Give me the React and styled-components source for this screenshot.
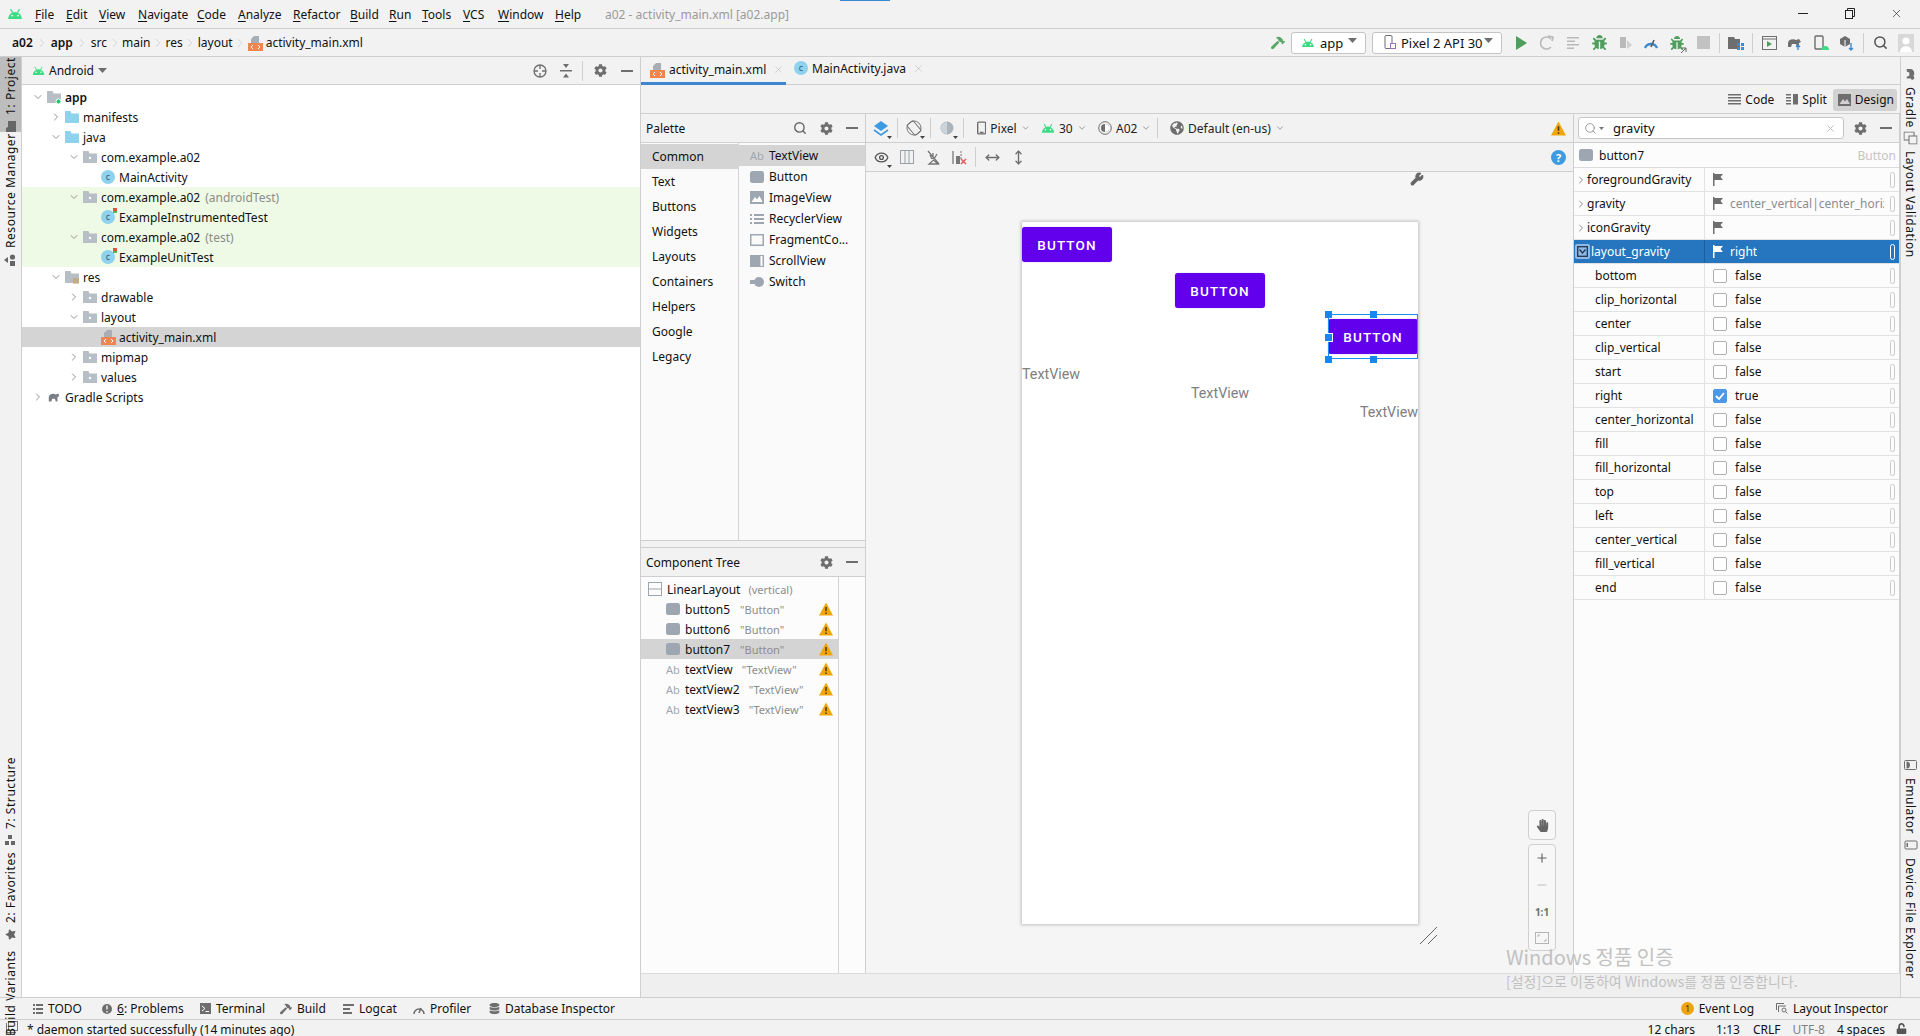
import React from "react";
import styled, { createGlobalStyle } from "styled-components";
import {
  FaCog, FaBug, FaStar, FaHandPaper, FaGlobeAmericas, FaDatabase, FaUnlock, FaHammer,
} from "react-icons/fa";
import { Search, X, Minus, Plus, Eye, ChevronDown, ChevronRight, MoveHorizontal, MoveVertical, Wrench } from "lucide-react";

const GlobalStyle = createGlobalStyle`
  html, body { margin: 0; padding: 0; background: #f2f2f2; }
  * { box-sizing: border-box; }
  body { font-family: "Noto Sans", "Noto Sans CJK KR", sans-serif; font-size: 12px; color: #111; }
`;

/* small drawings */
const Android = ({ size = 16, color = "#3ddc84" }) => (
  <svg width={size} height={size * 0.7} viewBox="0 0 16 11">
    <path d="M1 11a7 7 0 0 1 14 0z" fill={color} />
    <path d="M3.5 1 5.5 4.5M12.5 1 10.5 4.5" stroke={color} strokeWidth="1.2" />
    <circle cx="5" cy="7.5" r=".9" fill="#fff" />
    <circle cx="11" cy="7.5" r=".9" fill="#fff" />
  </svg>
);
const Folder = ({ color = "#b8bec6", dot, lines }) => (
  <svg width="14" height="14" viewBox="0 0 14 14">
    <path d="M0 1h5.5l1 2.5H14V13H0z" fill={color} />
    {dot === "white" && <circle cx="7" cy="8" r="1.2" fill="#fff" />}
    {dot === "green" && <circle cx="11.5" cy="11.5" r="2.5" fill="#1ec96b" stroke="#fff" />}
    {lines && <path d="M8 9h6M8 11h6M8 13h6" stroke="#c99a4b" strokeWidth="1" />}
  </svg>
);
const XmlFile = () => (
  <svg width="15" height="16" viewBox="0 0 15 16">
    <path d="M6 1h5v7H3V4z" fill="#a9aeb5" />
    <rect y="8" width="15" height="8" fill="#f0854e" />
    <path d="M5 10 3 12l2 2M10 10l2 2-2 2" fill="none" stroke="#fff" strokeWidth="1" />
  </svg>
);
const Warn = ({ size = 14 }) => (
  <svg width={size} height={size} viewBox="0 0 14 14">
    <path d="M7 .5 14 13.5H0z" fill="#f2a50c" />
    <path d="M7 5v4.2M7 10.4V12" stroke="#4a3a10" strokeWidth="1.5" />
  </svg>
);
const Flag = ({ color = "#6e6e6e" }) => (
  <svg width="10" height="13" viewBox="0 0 10 13">
    <path d="M0 0h1.5v1H10L7.5 4 10 7H1.5v6H0z" fill={color} />
  </svg>
);
const ButtonGlyph = () => (
  <svg width="14" height="12" viewBox="0 0 14 12"><rect width="14" height="12" rx="2.5" fill="#9ea7b1" /></svg>
);
const Chevron = ({ open }) =>
  open ? <ChevronDown size={12} color="#777" strokeWidth={1.6} /> : <ChevronRight size={12} color="#777" strokeWidth={1.6} />;
const Gear = () => <FaCog size={13} color="#6e6e6e" />;
const Dash = () => <svg width="12" height="2" viewBox="0 0 12 2"><rect width="12" height="2" fill="#6e6e6e" /></svg>;
const Caret = () => <svg width="9" height="5" viewBox="0 0 9 5"><path d="M0 0h9L4.5 5z" fill="#6e6e6e" /></svg>;
const SlimChevron = () => <ChevronDown size={10} color="#8a8a8a" strokeWidth={2} />;

/* shell */
const Root = styled.div`
  width: 1920px; height: 1036px; display: flex; flex-direction: column; overflow: hidden; position: relative; background: #f2f2f2;
`;
const MenuBar = styled.div`
  height: 29px; flex: none; display: flex; align-items: center; border-bottom: 1px solid #cfcfcf; position: relative; padding-bottom: 1px;
`;
const Progress = styled.div`
  position: absolute; top: 0; left: 840px; width: 50px; height: 1px; background: #3d86d0;
`;
const AppLogo = styled.div`
  width: 35px; padding-left: 7px; display: flex; align-items: center;
`;
const MenuItem = styled.span`
  position: absolute; left: ${(p) => p.$x}px; top: 6px; line-height: 17px;
  u { text-underline-offset: 2px; }
`;
const WindowTitle = styled.span`
  position: absolute; left: 605px; top: 6px; line-height: 17px; color: #9a9a9a;
`;
const WindowButtons = styled.div`
  margin-left: auto; display: flex; align-items: center; height: 100%;
`;
const WindowButton = styled.div`
  width: 47px; display: flex; align-items: center; justify-content: center;
`;
const NavBar = styled.div`
  height: 28px; flex: none; display: flex; align-items: center; border-bottom: 1px solid #cfcfcf; padding-left: 12px;
`;
const Crumb = styled.span`
  font-weight: ${(p) => (p.$bold ? 600 : 400)};
  display: flex; align-items: center; gap: 3px;
`;
const CrumbSep = styled.span`
  display: flex; width: ${(p) => p.$w || 20}px; justify-content: center;
`;
const RunBar = styled.div`
  margin-left: auto; display: flex; align-items: center; height: 100%; padding-right: 1px;
`;
const Combo = styled.div`
  height: 22px; width: ${(p) => p.$w}px; margin-right: 6px; border: 1px solid #c4c4c4; border-radius: 3px; background: #fff;
  display: flex; align-items: center; gap: 5px; padding-left: ${(p) => p.$pad}px; position: relative; font-size: 13px;
`;
const ComboCaret = styled.span`
  position: absolute; right: 8px; top: 5px; display: flex;
`;
const ToolCell = styled.div`
  width: ${(p) => p.$w || 26}px; height: 26px; flex: none; display: flex; align-items: center; justify-content: center; color: #6e6e6e; position: relative;
`;
const ToolSep = styled.div`
  width: 1px; height: 20px; flex: none; background: #cfcfcf; margin: 0 ${(p) => p.$m ?? 3}px;
`;
const Middle = styled.div`
  flex: 1; min-height: 0; display: flex;
`;
const SideStrip = styled.div`
  width: ${(p) => (p.$right ? 20 : 22)}px; flex: none; display: flex; flex-direction: column;
  border-${(p) => (p.$right ? "left" : "right")}: 1px solid #cfcfcf;
`;
const SideTab = styled.div`
  display: flex; align-items: center; justify-content: center; gap: 6px; width: 100%;
  writing-mode: vertical-rl;
  transform: ${(p) => (p.$right ? "none" : "rotate(180deg)")};
  height: ${(p) => p.$h}px; margin-top: ${(p) => p.$top || 0}px;
  background: ${(p) => (p.$active ? "#bdbdbd" : "transparent")};
  font-size: 12px; letter-spacing: .55px; white-space: nowrap;
  padding: 0;
  svg { transform: rotate(90deg); flex: none; }
`;
const ProjectPanel = styled.div`
  width: 619px; flex: none; display: flex; flex-direction: column; background: #fff; border-right: 1px solid #cfcfcf;
`;
const ProjectHead = styled.div`
  height: 28px; flex: none; background: #f2f2f2; border-bottom: 1px solid #cfcfcf; display: flex; align-items: center; padding-left: 10px; gap: 4px;
`;
const HeadIcons = styled.div`
  margin-left: auto; display: flex; align-items: center; padding-right: 0;
`;
const Tree = styled.div`
  padding-top: 2px; display: flex; flex-direction: column;
`;
const TreeRow = styled.div`
  height: 20px; flex: none; display: flex; align-items: center; white-space: nowrap;
  padding-left: ${(p) => 6 + p.$level * 18}px;
  background: ${(p) => (p.$test ? "#eefae6" : p.$selected ? "#d4d4d4" : "transparent")};
`;
const Arrow = styled.span`
  width: 19px; flex: none; display: flex; justify-content: center;
`;
const RowIcon = styled.span`
  width: 18px; flex: none; display: flex; align-items: center;
`;
const Muted = styled.span`
  color: #8c8c8c; margin-left: 5px;
`;
const ClassBadge = styled.span`
  width: 14px; height: 14px; border-radius: 50%; background: #8ed2ee; color: #3a5a6a; font-size: 9px; line-height: 13px; text-align: center; position: relative; flex: none;
  &::after {
    content: ""; display: ${(p) => (p.$test ? "block" : "none")}; position: absolute; right: -2px; top: -2px; width: 4px; height: 5px; background: linear-gradient(#e4523b 50%, #56b35a 50%);
  }
`;

/* editor */
const Main = styled.div`
  flex: 1; min-width: 0; display: flex; flex-direction: column;
`;
const TabBar = styled.div`
  height: 28px; flex: none; display: flex; border-bottom: 1px solid #cfcfcf;
`;
const Tab = styled.div`
  width: ${(p) => p.$w}px; height: 28px; display: flex; align-items: center; gap: 4px; padding-left: ${(p) => p.$pad}px;
  border-bottom: 3px solid ${(p) => (p.$active ? "#3f86cf" : "transparent")};
  padding-bottom: ${(p) => (p.$active ? 0 : 3)}px;
`;
const TabClose = styled.span`
  display: flex; margin-left: 3px;
`;
const ModeBar = styled.div`
  height: 29px; flex: none; border-bottom: 1px solid #cfcfcf; display: flex; align-items: center; justify-content: flex-end; padding-right: 3px; padding-top: 1px;
`;
const ModeButton = styled.div`
  height: 22px; display: flex; align-items: center; gap: 4px; padding: 0 ${(p) => (p.$active ? "3px 0 5px" : "0")};
  margin-left: ${(p) => p.$gap}px; border-radius: 3px; background: ${(p) => (p.$active ? "#d2d2d2" : "transparent")};
`;
const EditorRow = styled.div`
  flex: 1; min-height: 0; display: flex;
`;
const LeftColumn = styled.div`
  width: 225px; flex: none; display: flex; flex-direction: column; border-right: 1px solid #cfcfcf; background: #f2f2f2;
`;
const PanelHead = styled.div`
  height: 29px; flex: none; display: flex; align-items: center; padding-left: 5px; border-bottom: 1px solid #cfcfcf; background: #f2f2f2;
`;
const PaletteBody = styled.div`
  height: 397px; flex: none; display: flex; background: #fafafa;
`;
const PaletteGroups = styled.div`
  width: 98px; flex: none; border-right: 1px solid #d4d4d4;
`;
const PaletteGroup = styled.div`
  height: 25px; line-height: 25px; padding-left: 11px; background: ${(p) => (p.$active ? "#d4d4d4" : "transparent")};
  margin-top: ${(p) => (p.$active ? 1 : 0)}px;
`;
const PaletteList = styled.div`
  flex: 1; padding-top: 2px;
`;
const PaletteItem = styled.div`
  height: 21px; display: flex; align-items: center; padding-left: 11px; gap: 5px;
  background: ${(p) => (p.$active ? "#d4d4d4" : "transparent")};
`;
const PaletteIcon = styled.span`
  width: 14px; flex: none; display: flex; align-items: center; color: #9ea7b1; font-size: 11px;
`;
const PanelGap = styled.div`
  height: 8px; flex: none; border-top: 1px solid #cfcfcf; border-bottom: 1px solid #cfcfcf;
`;
const TreeBody = styled.div`
  flex: 1; display: flex; background: #fcfcfc;
`;
const CompList = styled.div`
  width: 198px; flex: none; border-right: 1px solid #d4d4d4; padding-top: 2px;
`;
const CompRow = styled.div`
  height: 20px; display: flex; align-items: center; padding-left: ${(p) => p.$indent}px; position: relative;
  background: ${(p) => (p.$selected ? "#d4d4d4" : "transparent")};
`;
const CompIcon = styled.span`
  width: ${(p) => p.$w || 19}px; flex: none; display: flex; align-items: center; color: #9ea7b1; font-size: 11px;
`;
const CompHint = styled.span`
  color: #8c8c8c; margin-left: ${(p) => p.$gap}px; font-size: 11px;
`;
const RowWarn = styled.span`
  position: absolute; left: 178px; top: 3px; display: flex;
`;
const Surface = styled.div`
  width: 708px; flex: none; display: flex; flex-direction: column; background: #f5f5f5; border-right: 1px solid #cfcfcf;
`;
const SurfaceBar = styled.div`
  height: ${(p) => p.$h}px; flex: none; display: flex; align-items: center; padding-left: 2px; background: #f2f2f2; border-bottom: 1px solid #cfcfcf;
`;
const DropItem = styled.div`
  width: ${(p) => p.$w}px; flex: none; margin-left: ${(p) => p.$m || 0}px; display: flex; align-items: center; gap: ${(p) => p.$gap ?? 4}px; color: #222;
`;
const SmallCaret = styled.span`
  position: absolute; right: ${(p) => p.$r ?? 2}px; bottom: 2px; display: flex;
`;
const EndCell = styled.div`
  margin-left: auto; width: 26px; display: flex; justify-content: center; margin-right: 2px;
`;
const Canvas = styled.div`
  flex: 1; position: relative; padding: 50px 0 0 156px;
`;
const Grip = styled.div`
  position: absolute; left: 544px; top: 0; color: #666; display: flex;
`;
const DeviceFrame = styled.div`
  width: 396px; height: 702px; background: #fff; box-shadow: 0 0 3px 1px rgba(0,0,0,.22); display: flex; flex-direction: column; padding-top: 5px; position: relative;
`;
const PurpleButton = styled.div`
  width: 90px; height: 35px; margin-bottom: 11px; border-radius: 3px; background: #6200ee; color: #fff; box-shadow: 0 0 1px rgba(98,0,238,.6);
  font-family: Roboto, sans-serif; font-weight: 500; font-size: 13.5px; letter-spacing: 1.15px; display: flex; align-items: center; justify-content: center;
  align-self: ${(p) => p.$align}; position: relative;
`;
const TextViewLine = styled.div`
  font-family: Roboto, sans-serif; font-size: 14.3px; color: #808080; line-height: 19px; align-self: ${(p) => p.$align};
`;
const Selection = styled.div`
  position: absolute; left: 0; right: 0; top: -5px; bottom: -5px; border: 1px solid #1e8cf5; border-left: 1px solid #1e8cf5;
`;
const Handle = styled.span`
  position: absolute; width: 7px; height: 7px; background: #1886f0; box-shadow: ${(p) => (p.$ring ? "0 0 0 1px #fff" : "none")};
  left: ${(p) => p.$x}px; top: ${(p) => p.$y}px;
`;
const ZoomBox = styled.div`
  position: absolute; left: 662px; top: ${(p) => p.$top}px; width: 28px; height: ${(p) => p.$h}px; border: 1px solid #d0d0d0; border-radius: 4px; background: #f7f7f7;
  display: flex; flex-direction: column; align-items: center; justify-content: space-around;
`;
const ZoomLabel = styled.span`
  font-size: 10px; font-weight: 700; color: #6e6e6e;
`;
const Resize = styled.svg`
  position: absolute; left: 554px; top: 755px;
`;
const AttrPanel = styled.div`
  flex: 1; min-width: 0; display: flex; flex-direction: column; background: #fcfcfc; border-right: 1px solid #cfcfcf;
`;
const AttrSearchBar = styled.div`
  height: 29px; flex: none; display: flex; align-items: center; background: #f2f2f2; border-bottom: 1px solid #cfcfcf; padding-left: 4px;
`;
const SearchBox = styled.div`
  width: 266px; height: 22px; border: 1px solid #c6c6c6; border-radius: 3px; background: #fff; display: flex; align-items: center; padding: 0 7px 0 5px; gap: 2px;
`;
const SearchText = styled.span`
  margin-left: 7px; font-size: 13px; flex: 1;
`;
const AttrName = styled.div`
  height: 25px; flex: none; display: flex; align-items: center; padding: 0 3px 0 5px; gap: 6px; border-bottom: 1px solid #dcdcdc;
`;
const AttrType = styled.span`
  margin-left: auto; color: #c4c4c4;
`;
const AttrRow = styled.div`
  height: 24px; flex: none; display: flex; border-bottom: 1px solid #e2e2e2;
  background: ${(p) => (p.$selected ? "#2675bf" : "transparent")}; color: ${(p) => (p.$selected ? "#fff" : "inherit")};
`;
const AttrKey = styled.div`
  width: 131px; flex: none; display: flex; align-items: center; padding-left: ${(p) => p.$pad}px; border-right: 1px solid ${(p) => (p.$selected ? "#1d5f9e" : "#e2e2e2")};
`;
const AttrValue = styled.div`
  flex: 1; display: flex; align-items: center; padding-left: 8px; position: relative; min-width: 0;
`;
const ValueText = styled.span`
  margin-left: ${(p) => p.$m}px; color: ${(p) => p.$color || "inherit"}; white-space: nowrap; overflow: hidden; width: ${(p) => p.$w || "auto"};
`;
const CheckBox = styled.span`
  width: 14px; height: 14px; border-radius: 2px; flex: none; border: 1px solid ${(p) => (p.$on ? "#4c98e6" : "#b0b0b0")}; background: ${(p) => (p.$on ? "#4c98e6" : "#fff")};
  display: flex; align-items: center; justify-content: center;
`;
const TreeToggle = styled.span`
  width: 15px; height: 15px; flex: none; border-radius: 2px; background: #8fb8e6; display: flex; align-items: center; justify-content: center; margin-right: 1px;
`;
const Pill = styled.span`
  position: absolute; right: 4px; top: 4px; width: 5px; height: 16px; border-radius: 3px; border: 1px solid ${(p) => (p.$light ? "#fff" : "#c8c8c8")};
`;
const BottomStrip = styled.div`
  height: 24px; flex: none; background: #efefef; border-top: 1px solid #dcdcdc;
`;
const ToolWindowBar = styled.div`
  height: 22px; flex: none; display: flex; align-items: center; border-top: 1px solid #cfcfcf; padding-left: 33px; position: relative;
`;
const ToolItem = styled.div`
  display: flex; align-items: center; gap: 5px; width: ${(p) => p.$w}px; flex: none;
  svg { flex: none; }
`;
const ToolRight = styled.div`
  margin-left: auto; display: flex; padding-right: 32px; gap: 22px;
`;
const StatusBar = styled.div`
  height: 17px; flex: none; display: flex; align-items: flex-start; border-top: 1px solid #cfcfcf; padding: 1px 0 0 6px; line-height: 17px;
`;
const StatusMsg = styled.span`
  margin-left: 9px; white-space: nowrap;
`;
const StatusItem = styled.span`
  margin-left: ${(p) => p.$m}px; white-space: nowrap; color: ${(p) => p.$color || "inherit"};
`;
const StatusRight = styled.div`
  margin-left: auto; display: flex; padding-right: 13px;
`;
const Watermark = styled.div`
  position: absolute; left: 1506px; top: 942px; color: #b9b9b9; font-family: "Noto Sans CJK KR", "Noto Sans", sans-serif; pointer-events: none; opacity: .85;
`;
const WaterTitle = styled.div`
  font-size: 20px; line-height: 29px;
`;
const WaterSub = styled.div`
  font-size: 14px; line-height: 17px; margin-top: 2px;
`;

const MENUS = [
  ["F", "ile", 35], ["E", "dit", 66], ["V", "iew", 99], ["N", "avigate", 138], ["C", "ode", 197],
  ["A", "nalyze", 238], ["R", "efactor", 293], ["B", "uild", 350], ["R", "un", 389], ["T", "ools", 422],
  ["V", "CS", 463], ["W", "indow", 498], ["H", "elp", 555],
];

const TREE = [
  { level: 0, open: true, icon: "app", label: "app", bold: true },
  { level: 1, open: false, icon: "blue", label: "manifests" },
  { level: 1, open: true, icon: "blue", label: "java" },
  { level: 2, open: true, icon: "pkg", label: "com.example.a02" },
  { level: 3, icon: "class", label: "MainActivity" },
  { level: 2, open: true, icon: "pkg", label: "com.example.a02", hint: "(androidTest)", test: true },
  { level: 3, icon: "testclass", label: "ExampleInstrumentedTest", test: true },
  { level: 2, open: true, icon: "pkg", label: "com.example.a02", hint: "(test)", test: true },
  { level: 3, icon: "testclass", label: "ExampleUnitTest", test: true },
  { level: 1, open: true, icon: "res", label: "res" },
  { level: 2, open: false, icon: "pkg", label: "drawable" },
  { level: 2, open: true, icon: "pkg", label: "layout" },
  { level: 3, icon: "xml", label: "activity_main.xml", selected: true },
  { level: 2, open: false, icon: "pkg", label: "mipmap" },
  { level: 2, open: false, icon: "pkg", label: "values" },
  { level: 0, open: false, icon: "gradle", label: "Gradle Scripts" },
];

const treeIcon = (kind) => {
  if (kind === "app") return <Folder dot="green" />;
  if (kind === "blue") return <Folder color="#8ed2ee" />;
  if (kind === "pkg") return <Folder dot="white" />;
  if (kind === "res") return <Folder lines />;
  if (kind === "class") return <ClassBadge>c</ClassBadge>;
  if (kind === "testclass") return <ClassBadge $test>c</ClassBadge>;
  if (kind === "xml") return <XmlFile />;
  return (
    <svg width="14" height="14" viewBox="0 0 16 16">
      <path d="M2 13V8a5 4 0 0 1 8-3l3-1 1 3-2 1v5h-2l-1-3H6l-1 3z" fill="#7b8088" />
    </svg>
  );
};

const GROUPS = ["Common", "Text", "Buttons", "Widgets", "Layouts", "Containers", "Helpers", "Google", "Legacy"];

const paletteIcons = {
  TextView: "Ab",
  Button: <ButtonGlyph />,
  ImageView: (
    <svg width="14" height="13" viewBox="0 0 14 13"><rect width="14" height="13" fill="#9ea7b1" /><path d="M1.5 11 5 6l2 2.5L9.5 5l3 6z" fill="#fff" /></svg>
  ),
  RecyclerView: (
    <svg width="14" height="12" viewBox="0 0 14 12"><path d="M0 1h2v2H0zM4 1h10v2H4zM0 5h2v2H0zM4 5h10v2H4zM0 9h2v2H0zM4 9h10v2H4z" fill="#9ea7b1" /></svg>
  ),
  "FragmentCo...": (
    <svg width="14" height="12" viewBox="0 0 14 12"><rect x=".75" y=".75" width="12.5" height="10.5" fill="none" stroke="#9ea7b1" strokeWidth="1.5" /></svg>
  ),
  ScrollView: (
    <svg width="14" height="12" viewBox="0 0 14 12"><rect width="14" height="12" fill="#9ea7b1" /><rect x="10.5" y="1" width="2" height="10" fill="#fff" /></svg>
  ),
  Switch: (
    <svg width="14" height="10" viewBox="0 0 14 10"><rect y="3" width="8" height="4" fill="#9ea7b1" /><circle cx="9" cy="5" r="5" fill="#9ea7b1" /></svg>
  ),
};

const COMPONENTS = [
  { name: "button5", hint: '"Button"', gap: 10 },
  { name: "button6", hint: '"Button"', gap: 10 },
  { name: "button7", hint: '"Button"', gap: 10, selected: true },
  { name: "textView", hint: '"TextView"', gap: 9, text: true },
  { name: "textView2", hint: '"TextView"', gap: 9, text: true },
  { name: "textView3", hint: '"TextView"', gap: 9, text: true },
];

const GRAVITY = [
  ["bottom"], ["clip_horizontal"], ["center"], ["clip_vertical"], ["start"], ["right", true],
  ["center_horizontal"], ["fill"], ["fill_horizontal"], ["top"], ["left"], ["center_vertical"], ["fill_vertical"], ["end"],
];

const RunIcons = () => (
  <>
    <ToolCell><svg width="14" height="16" viewBox="0 0 14 16"><path d="M2 1l11 7-11 7z" fill="#4f9e5e" /></svg></ToolCell>
    <ToolCell>
      <svg width="16" height="16" viewBox="0 0 16 16" fill="none" stroke="#b9b9b9" strokeWidth="1.6"><path d="M12 4a6 6 0 1 0 0 8" /><path d="M9 1l5 1-1 4" /></svg>
    </ToolCell>
    <ToolCell>
      <svg width="15" height="15" viewBox="0 0 15 15" fill="#b9b9b9"><path d="M1 2h12v1.5H1zM1 5.5h8V7H1zM1 9h12v1.5H1zM1 12.5h7V14H1z" /></svg>
    </ToolCell>
    <ToolCell><FaBug size={15} color="#4f9e5e" /></ToolCell>
    <ToolCell>
      <svg width="15" height="15" viewBox="0 0 15 15"><path d="M2 2h6v11H2z" fill="#b9b9b9" /><path d="M9 5l5 5-5 4z" fill="#cfcfcf" /></svg>
    </ToolCell>
    <ToolCell>
      <svg width="16" height="16" viewBox="0 0 16 16" fill="none"><path d="M2 13a6.5 6.5 0 0 1 12 0" stroke="#3c8ad0" strokeWidth="2.4" /><path d="M8 12 11 5" stroke="#5a5a5a" strokeWidth="1.6" /></svg>
    </ToolCell>
    <ToolCell>
      <FaBug size={14} color="#4f9e5e" /><SmallCaret $r={3}><svg width="7" height="7" viewBox="0 0 7 7"><path d="M1 6l5-5M2 1h4v4" stroke="#666" fill="none" /></svg></SmallCaret>
    </ToolCell>
    <ToolCell><svg width="13" height="13" viewBox="0 0 13 13"><rect width="13" height="13" fill="#c2c2c2" /></svg></ToolCell>
    <ToolSep />
    <ToolCell>
      <svg width="16" height="14" viewBox="0 0 16 14"><path d="M0 1h6l1 2h5v10H0z" fill="#6e6e6e" /><path d="M9 7h3v3H9zM13 7h3v3h-3zM9 11h3v3H9zM13 11h3v3h-3z" fill="#3c8ad0" /></svg>
    </ToolCell>
    <ToolSep />
    <ToolCell>
      <svg width="15" height="14" viewBox="0 0 15 14"><rect x=".5" y=".5" width="14" height="13" fill="none" stroke="#6e6e6e" /><path d="M.5 3h14" stroke="#6e6e6e" /><path d="M5 5l5 3-5 3z" fill="#4f9e5e" /></svg>
    </ToolCell>
    <ToolCell>
      <svg width="16" height="16" viewBox="0 0 16 16"><path d="M1 12V8a5 4 0 0 1 8-3l3-1 2 3-2 1v4H10l-1-3H5l-1 3z" fill="#6e6e6e" /><path d="M11 15V10M9 12l2-2 2 2" stroke="#3c8ad0" strokeWidth="1.4" fill="none" /></svg>
    </ToolCell>
    <ToolCell>
      <svg width="16" height="16" viewBox="0 0 16 16"><rect x="2" y="1" width="8" height="13" rx="1" fill="none" stroke="#6e6e6e" strokeWidth="1.4" /><path d="M8 15a4 4 0 0 1 8 0z" fill="#3ddc84" /></svg>
    </ToolCell>
    <ToolCell>
      <svg width="16" height="16" viewBox="0 0 16 16"><path d="M1 4l5-3 5 3v5l-5 3-5-3z" fill="#6e6e6e" /><path d="M6 5v7" stroke="#fff" /><path d="M12 8v7M10 13l2 2 2-2" stroke="#3c8ad0" strokeWidth="1.4" fill="none" /></svg>
    </ToolCell>
    <ToolSep />
    <ToolCell><Search size={15} color="#555" strokeWidth={2.4} /></ToolCell>
    <ToolCell>
      <svg width="16" height="18" viewBox="0 0 16 18"><rect width="16" height="18" fill="#d8d8d8" /><circle cx="8" cy="7" r="3.5" fill="#fff" /><path d="M2 18a6 6 0 0 1 12 0z" fill="#fff" /></svg>
    </ToolCell>
  </>
);

const App = () => {
  return (
    <Root>
      <GlobalStyle />
      <MenuBar>
        <Progress />
        <AppLogo><Android size={16} /></AppLogo>
        {MENUS.map(([key, rest, x]) => (
          <MenuItem key={x} $x={x}><u>{key}</u>{rest}</MenuItem>
        ))}
        <WindowTitle>a02 - activity_main.xml [a02.app]</WindowTitle>
        <WindowButtons>
          <WindowButton><svg width="10" height="1"><rect width="10" height="1" fill="#222" /></svg></WindowButton>
          <WindowButton>
            <svg width="10" height="11" viewBox="0 0 10 11" fill="none" stroke="#222"><rect x=".5" y="2.5" width="7" height="8" /><path d="M2.5 2.5v-2h7v8h-2" /></svg>
          </WindowButton>
          <WindowButton><X size={13} color="#222" strokeWidth={1.2} /></WindowButton>
        </WindowButtons>
      </MenuBar>

      <NavBar>
        <Crumb $bold>a02</Crumb><CrumbSep $w={18}><ChevronRight size={14} color="#bbb" strokeWidth={1} /></CrumbSep>
        <Crumb $bold>app</Crumb><CrumbSep $w={18}><ChevronRight size={14} color="#bbb" strokeWidth={1} /></CrumbSep>
        <Crumb>src</Crumb><CrumbSep $w={15}><ChevronRight size={14} color="#bbb" strokeWidth={1} /></CrumbSep>
        <Crumb>main</Crumb><CrumbSep $w={15}><ChevronRight size={14} color="#bbb" strokeWidth={1} /></CrumbSep>
        <Crumb>res</Crumb><CrumbSep $w={15}><ChevronRight size={14} color="#bbb" strokeWidth={1} /></CrumbSep>
        <Crumb>layout</Crumb><CrumbSep $w={15}><ChevronRight size={14} color="#bbb" strokeWidth={1} /></CrumbSep>
        <Crumb><XmlFile />activity_main.xml</Crumb>
        <RunBar>
          <ToolCell $w={26}><FaHammer size={14} color="#59a869" /></ToolCell>
          <Combo $w={75} $pad={9}><Android size={14} /><span>app</span><ComboCaret><Caret /></ComboCaret></Combo>
          <Combo $w={130} $pad={11}>
            <svg width="12" height="15" viewBox="0 0 12 15"><rect x="1" y=".5" width="7" height="13" rx="1" fill="#fff" stroke="#6e6e6e" /><rect x="6.5" y="8.5" width="5" height="5" fill="#fff" stroke="#9a74c4" /></svg>
            <span>Pixel 2 API 30</span><ComboCaret><Caret /></ComboCaret>
          </Combo>
          <RunIcons />
        </RunBar>
      </NavBar>

      <Middle>
        <SideStrip>
          <SideTab $h={85} $active>
            <svg width="11" height="11" viewBox="0 0 11 11"><path d="M0 1h4l1 2h6v8H0z" fill="#666" /></svg>
            <span>1: Project</span>
          </SideTab>
          <SideTab $h={114} $top={11}>
            <svg width="12" height="12" viewBox="0 0 12 12"><path d="M6 0l3 4H3zM0 6h5v5H0z" fill="#666" /><circle cx="9" cy="8.5" r="2.6" fill="#666" /></svg>
            <span>Resource Manager</span>
          </SideTab>
          <SideTab $h={74} $top={507}>
            <svg width="10" height="10" viewBox="0 0 10 10"><path d="M0 0h4v4H0zM0 6h4v4H0zM6 3h4v4H6z" fill="#666" /></svg>
            <span>7: Structure</span>
          </SideTab>
          <SideTab $h={76} $top={20}>
            <FaStar size={11} color="#666" />
            <span>2: Favorites</span>
          </SideTab>
          <SideTab $h={86} $top={23}>
            <Android size={11} color="#666" />
            <span>Build Variants</span>
          </SideTab>
        </SideStrip>

        <ProjectPanel>
          <ProjectHead>
            <Android size={13} />
            <span>Android</span>
            <Caret />
            <HeadIcons>
              <ToolCell>
                <svg width="14" height="14" viewBox="0 0 14 14" fill="none" stroke="#6e6e6e" strokeWidth="1.3"><circle cx="7" cy="7" r="6" /><path d="M7 1v4M7 9v4M1 7h4M9 7h4" /></svg>
              </ToolCell>
              <ToolCell>
                <svg width="12" height="14" viewBox="0 0 12 14" fill="#6e6e6e"><path d="M0 6h12v1.5H0zM3 0h6L6 4zM3 13.5h6L6 9.5z" /></svg>
              </ToolCell>
              <ToolSep $m={3} />
              <ToolCell $w={28}><Gear /></ToolCell>
              <ToolCell><Dash /></ToolCell>
            </HeadIcons>
          </ProjectHead>
          <Tree>
            {TREE.map((row, i) => (
              <TreeRow key={i} $level={row.level} $test={row.test} $selected={row.selected}>
                <Arrow>{row.open !== undefined && <Chevron open={row.open} />}</Arrow>
                <RowIcon>{treeIcon(row.icon)}</RowIcon>
                <Crumb $bold={row.bold}>{row.label}</Crumb>
                {row.hint && <Muted>{row.hint}</Muted>}
              </TreeRow>
            ))}
          </Tree>
        </ProjectPanel>

        <Main>
          <TabBar>
            <Tab $w={145} $pad={9} $active>
              <XmlFile /><span>activity_main.xml</span>
              <TabClose><X size={11} color="#b4b4b4" strokeWidth={1.2} /></TabClose>
            </Tab>
            <Tab $w={135} $pad={8}>
              <ClassBadge>c</ClassBadge><span>MainActivity.java</span>
              <TabClose><X size={11} color="#b4b4b4" strokeWidth={1.2} /></TabClose>
            </Tab>
          </TabBar>
          <ModeBar>
            <ModeButton>
              <svg width="13" height="13" viewBox="0 0 13 13" fill="#6e6e6e"><path d="M0 1h13v1.6H0zM0 4h13v1.6H0zM0 7h13v1.6H0zM0 10h13v1.6H0z" /></svg>
              <span>Code</span>
            </ModeButton>
            <ModeButton $gap={12}>
              <svg width="12" height="13" viewBox="0 0 12 13" fill="#6e6e6e"><path d="M0 1h5v1.5H0zM0 4h5v1.5H0zM0 7h5v1.5H0zM0 10h5v1.5H0zM7 1h5v10.5H7z" /></svg>
              <span>Split</span>
            </ModeButton>
            <ModeButton $gap={6} $active>
              <svg width="13" height="12" viewBox="0 0 13 12"><rect width="13" height="12" fill="#6e6e6e" /><path d="M1.5 10 5 5l2 2.5L9 5l3 5z" fill="#d2d2d2" /></svg>
              <span>Design</span>
            </ModeButton>
          </ModeBar>

          <EditorRow>
            <LeftColumn>
              <PanelHead>
                <span>Palette</span>
                <HeadIcons>
                  <ToolCell><Search size={14} color="#666" strokeWidth={2.4} /></ToolCell>
                  <ToolCell><Gear /></ToolCell>
                  <ToolCell><Dash /></ToolCell>
                </HeadIcons>
              </PanelHead>
              <PaletteBody>
                <PaletteGroups>
                  {GROUPS.map((g, i) => <PaletteGroup key={g} $active={i === 0}>{g}</PaletteGroup>)}
                </PaletteGroups>
                <PaletteList>
                  {Object.entries(paletteIcons).map(([name, icon], i) => (
                    <PaletteItem key={name} $active={i === 0}>
                      <PaletteIcon>{icon}</PaletteIcon><span>{name}</span>
                    </PaletteItem>
                  ))}
                </PaletteList>
              </PaletteBody>
              <PanelGap />
              <PanelHead>
                <span>Component Tree</span>
                <HeadIcons>
                  <ToolCell><Gear /></ToolCell>
                  <ToolCell><Dash /></ToolCell>
                </HeadIcons>
              </PanelHead>
              <TreeBody>
                <CompList>
                  <CompRow $indent={7}>
                    <CompIcon>
                      <svg width="14" height="14" viewBox="0 0 14 14" fill="none" stroke="#9ea7b1"><rect x=".5" y=".5" width="13" height="13" /><path d="M0 7h14" /></svg>
                    </CompIcon>
                    <span>LinearLayout</span><CompHint $gap={8}>(vertical)</CompHint>
                  </CompRow>
                  {COMPONENTS.map((c) => (
                    <CompRow key={c.name} $indent={25} $selected={c.selected}>
                      <CompIcon>{c.text ? "Ab" : <ButtonGlyph />}</CompIcon>
                      <span>{c.name}</span><CompHint $gap={c.gap}>{c.hint}</CompHint>
                      <RowWarn><Warn /></RowWarn>
                    </CompRow>
                  ))}
                </CompList>
              </TreeBody>
            </LeftColumn>

            <Surface>
              <SurfaceBar $h={29}>
                <ToolCell>
                  <svg width="16" height="16" viewBox="0 0 16 16"><path d="M8 1l7 5-7 5-7-5z" fill="#3f9be0" /><path d="M1 10l7 5 7-5" fill="none" stroke="#3f9be0" strokeWidth="1.6" /></svg>
                  <SmallCaret><svg width="5" height="3"><path d="M0 0h5L2.5 3z" fill="#444" /></svg></SmallCaret>
                </ToolCell>
                <ToolSep />
                <ToolCell>
                  <svg width="16" height="16" viewBox="0 0 16 16" fill="none" stroke="#777"><rect x="4" y="1.5" width="8" height="13" rx="1" transform="rotate(-40 8 8)" /><circle cx="8" cy="8" r="7" /></svg>
                  <SmallCaret><svg width="5" height="3"><path d="M0 0h5L2.5 3z" fill="#444" /></svg></SmallCaret>
                </ToolCell>
                <ToolSep />
                <ToolCell>
                  <svg width="15" height="15" viewBox="0 0 15 15"><circle cx="7" cy="7" r="6.5" fill="#a9b4bd" /><path d="M7 1a6 6 0 0 0 0 12z" fill="#cdd5db" /></svg>
                  <SmallCaret><svg width="5" height="3"><path d="M0 0h5L2.5 3z" fill="#444" /></svg></SmallCaret>
                </ToolCell>
                <ToolSep />
                <DropItem $m={10} $w={53}>
                  <svg width="10" height="14" viewBox="0 0 10 14"><rect x=".75" y=".75" width="8.5" height="12.5" rx="1" fill="none" stroke="#6e6e6e" strokeWidth="1.5" /><rect x="3" y="11" width="4" height="1.5" fill="#6e6e6e" /></svg>
                  <span>Pixel</span><SlimChevron />
                </DropItem>
                <DropItem $m={11} $w={46}><Android size={14} /><span>30</span><SlimChevron /></DropItem>
                <DropItem $m={11} $w={55}>
                  <svg width="14" height="14" viewBox="0 0 14 14"><circle cx="7" cy="7" r="6.3" fill="none" stroke="#6e6e6e" /><circle cx="7" cy="7" r="4" fill="#6e6e6e" /><path d="M7 3a4 4 0 0 1 0 8z" fill="#fff" /></svg>
                  <span>A02</span><SlimChevron />
                </DropItem>
                <ToolSep $m={4} />
                <DropItem $m={8} $w={118}>
                  <FaGlobeAmericas size={14} color="#6e6e6e" /><span>Default (en-us)</span><SlimChevron />
                </DropItem>
                <EndCell><Warn size={15} /></EndCell>
              </SurfaceBar>
              <SurfaceBar $h={29}>
                <ToolCell>
                  <Eye size={15} color="#555" strokeWidth={2.2} />
                  <SmallCaret><svg width="5" height="3"><path d="M0 0h5L2.5 3z" fill="#444" /></svg></SmallCaret>
                </ToolCell>
                <ToolCell>
                  <svg width="14" height="14" viewBox="0 0 14 14" fill="none" stroke="#9aa0a6"><rect x=".5" y=".5" width="13" height="13" /><path d="M5 .5v13M9 .5v13" /></svg>
                </ToolCell>
                <ToolCell>
                  <svg width="15" height="15" viewBox="0 0 15 15" fill="none" stroke="#777" strokeWidth="1.3"><path d="M2 1l11 13M4 5l2 4M7 3v6M11 4 8 9M3 14h9L7.5 10z" /></svg>
                </ToolCell>
                <ToolCell>
                  <svg width="15" height="15" viewBox="0 0 15 15"><path d="M1 1v13" stroke="#777" strokeWidth="1.3" /><path d="M4 6h4v8H4z" fill="#777" /><path d="M9 1v8" stroke="#777" strokeDasharray="2 1" /><path d="M9 9l5 5M14 9l-5 5" stroke="#e25a5a" strokeWidth="1.5" /></svg>
                </ToolCell>
                <ToolSep />
                <ToolCell><MoveHorizontal size={15} color="#6e6e6e" strokeWidth={2.2} /></ToolCell>
                <ToolCell><MoveVertical size={15} color="#6e6e6e" strokeWidth={2.2} /></ToolCell>
                <EndCell>
                  <svg width="15" height="15" viewBox="0 0 15 15"><circle cx="7.5" cy="7.5" r="7.5" fill="#3f9be0" /><text x="7.5" y="11.5" textAnchor="middle" fontSize="11" fontWeight="700" fill="#fff">?</text></svg>
                </EndCell>
              </SurfaceBar>
              <Canvas>
                <Grip><Wrench size={14} color="#666" fill="#666" /></Grip>
                <DeviceFrame>
                  <PurpleButton $align="flex-start">BUTTON</PurpleButton>
                  <PurpleButton $align="center">BUTTON</PurpleButton>
                  <PurpleButton $align="flex-end">
                    BUTTON
                    <Selection>
                      <Handle $x={-4} $y={-4} />
                      <Handle $x={41} $y={-4} />
                      <Handle $x={-4} $y={19} $ring />
                      <Handle $x={-4} $y={41} />
                      <Handle $x={41} $y={41} />
                    </Selection>
                  </PurpleButton>
                  <TextViewLine $align="flex-start">TextView</TextViewLine>
                  <TextViewLine $align="center">TextView</TextViewLine>
                  <TextViewLine $align="flex-end">TextView</TextViewLine>
                </DeviceFrame>
                <Resize width="18" height="18" viewBox="0 0 18 18" fill="none" stroke="#666">
                  <path d="M0 17 17 0M8 17 17 8" />
                </Resize>
                <ZoomBox $top={638} $h={30}><FaHandPaper size={13} color="#666" /></ZoomBox>
                <ZoomBox $top={672} $h={107}>
                  <Plus size={14} color="#666" strokeWidth={2} />
                  <Minus size={14} color="#bdbdbd" strokeWidth={2} />
                  <ZoomLabel>1:1</ZoomLabel>
                  <svg width="14" height="12" viewBox="0 0 14 12" fill="none" stroke="#b5b5b5"><rect x=".5" y=".5" width="13" height="11" /><path d="M3 5V3h2M11 7v2H9" /></svg>
                </ZoomBox>
              </Canvas>
            </Surface>

            <AttrPanel>
              <AttrSearchBar>
                <SearchBox>
                  <Search size={13} color="#888" strokeWidth={1.5} />
                  <svg width="5" height="3"><path d="M0 0h5L2.5 3z" fill="#777" /></svg>
                  <SearchText>gravity</SearchText>
                  <X size={11} color="#bbb" />
                </SearchBox>
                <HeadIcons>
                  <ToolCell><Gear /></ToolCell>
                  <ToolCell $w={26}><Dash /></ToolCell>
                </HeadIcons>
              </AttrSearchBar>
              <AttrName>
                <ButtonGlyph /><span>button7</span><AttrType>Button</AttrType>
              </AttrName>
              <AttrRow>
                <AttrKey $pad={1}><Chevron /><span>foregroundGravity</span></AttrKey>
                <AttrValue><Flag /><Pill /></AttrValue>
              </AttrRow>
              <AttrRow>
                <AttrKey $pad={1}><Chevron /><span>gravity</span></AttrKey>
                <AttrValue>
                  <Flag /><ValueText $m={7} $color="#8c8c8c" $w="154px">center_vertical|center_horizontal</ValueText><Pill />
                </AttrValue>
              </AttrRow>
              <AttrRow>
                <AttrKey $pad={1}><Chevron /><span>iconGravity</span></AttrKey>
                <AttrValue><Flag /><Pill /></AttrValue>
              </AttrRow>
              <AttrRow $selected>
                <AttrKey $pad={1} $selected>
                  <TreeToggle><svg width="11" height="11" viewBox="0 0 11 11" fill="none" stroke="#22364f" strokeWidth="1.3"><rect x=".7" y=".7" width="9.6" height="9.6" /><path d="M2.5 3.5 5.5 7l3-3.5" /></svg></TreeToggle>
                  <span>layout_gravity</span>
                </AttrKey>
                <AttrValue><Flag color="#fff" /><ValueText $m={7}>right</ValueText><Pill $light /></AttrValue>
              </AttrRow>
              {GRAVITY.map(([name, on]) => (
                <AttrRow key={name}>
                  <AttrKey $pad={21}>{name}</AttrKey>
                  <AttrValue>
                    <CheckBox $on={on}>
                      {on && <svg width="10" height="8" viewBox="0 0 10 8" fill="none" stroke="#fff" strokeWidth="1.8"><path d="M1 4l3 3 5-6" /></svg>}
                    </CheckBox>
                    <ValueText $m={8}>{on ? "true" : "false"}</ValueText>
                    <Pill />
                  </AttrValue>
                </AttrRow>
              ))}
            </AttrPanel>
          </EditorRow>
          <BottomStrip />
        </Main>

        <SideStrip $right>
          <SideTab $right $h={66} $top={8}>
            <svg width="14" height="12" viewBox="0 0 16 14"><path d="M1 12V7a5 4 0 0 1 8-3l3-1 2 3-2 1v5h-2l-1-3H5l-1 3z" fill="#6e6e6e" /></svg>
            <span>Gradle</span>
          </SideTab>
          <SideTab $right $h={106} $top={10}>
            <svg width="13" height="14" viewBox="0 0 13 14" fill="none" stroke="#6e6e6e"><rect x=".5" y="3.5" width="8" height="10" /><rect x="4.5" y=".5" width="8" height="8" fill="#f2f2f2" /></svg>
            <span>Layout Validation</span>
          </SideTab>
          <SideTab $right $h={70} $top={514}>
            <svg width="13" height="14" viewBox="0 0 13 14"><rect x="2" y="1" width="9" height="12" rx="1" fill="none" stroke="#6e6e6e" /><path d="M3 11a3.5 3.5 0 0 1 7 0z" fill="#6e6e6e" /></svg>
            <span>Emulator</span>
          </SideTab>
          <SideTab $right $h={122} $top={16}>
            <svg width="12" height="14" viewBox="0 0 12 14"><rect x="2" y="1" width="8" height="12" rx="1" fill="none" stroke="#6e6e6e" /><rect x="4" y="10" width="4" height="1.5" fill="#6e6e6e" /></svg>
            <span>Device File Explorer</span>
          </SideTab>
        </SideStrip>
      </Middle>

      <ToolWindowBar>
        <ToolItem $w={69}>
          <svg width="10" height="10" viewBox="0 0 10 10" fill="#6e6e6e"><path d="M0 0h2v2H0zM3 0h7v2H3zM0 4h2v2H0zM3 4h7v2H3zM0 8h2v2H0zM3 8h7v2H3z" /></svg>
          <span>TODO</span>
        </ToolItem>
        <ToolItem $w={98}>
          <svg width="10" height="12" viewBox="0 0 10 12"><circle cx="5" cy="6" r="5" fill="#6e6e6e" /><path d="M5 2.5v4M5 8v1.5" stroke="#fff" strokeWidth="1.3" /></svg>
          <span><u>6</u>: Problems</span>
        </ToolItem>
        <ToolItem $w={80}>
          <svg width="11" height="11" viewBox="0 0 11 11"><rect width="11" height="11" fill="#6e6e6e" /><path d="M2 3l3 2.5L2 8M5.5 8.5H9" stroke="#fff" fill="none" /></svg>
          <span>Terminal</span>
        </ToolItem>
        <ToolItem $w={63}>
          <FaHammer size={12} color="#6e6e6e" />
          <span>Build</span>
        </ToolItem>
        <ToolItem $w={70}>
          <svg width="11" height="10" viewBox="0 0 11 10" fill="#6e6e6e"><path d="M0 0h11v2H0zM0 4h7v2H0zM0 8h9v2H0z" /></svg>
          <span>Logcat</span>
        </ToolItem>
        <ToolItem $w={76}>
          <svg width="12" height="10" viewBox="0 0 12 10" fill="none" stroke="#6e6e6e" strokeWidth="1.6"><path d="M1 10a5 5 0 0 1 10 0" /><path d="M6 9 8 4" /></svg>
          <span>Profiler</span>
        </ToolItem>
        <ToolItem>
          <FaDatabase size={11} color="#6e6e6e" />
          <span>Database Inspector</span>
        </ToolItem>
        <ToolRight>
          <ToolItem>
            <svg width="13" height="13" viewBox="0 0 13 13"><circle cx="6.5" cy="6.5" r="6.5" fill="#f0a30a" /><text x="6.5" y="10" textAnchor="middle" fontSize="9" fill="#333">1</text></svg>
            <span>Event Log</span>
          </ToolItem>
          <ToolItem>
            <svg width="12" height="11" viewBox="0 0 12 11" fill="none" stroke="#6e6e6e"><path d="M.5 7V.5H8M2.5 9V3H10" /><circle cx="8" cy="7" r="2" /><path d="M9.5 8.5 11.5 10.5" /></svg>
            <span>Layout Inspector</span>
          </ToolItem>
        </ToolRight>
      </ToolWindowBar>
      <StatusBar>
        <svg width="12" height="12" viewBox="0 0 12 12" fill="none" stroke="#777"><rect x="2.5" y=".5" width="9" height="9" /><path d="M.5 2v9.5H10" /></svg>
        <StatusMsg>* daemon started successfully (14 minutes ago)</StatusMsg>
        <StatusRight>
          <StatusItem>12 chars</StatusItem>
          <StatusItem $m={21}>1:13</StatusItem>
          <StatusItem $m={13}>CRLF</StatusItem>
          <StatusItem $m={12} $color="#80808a">UTF-8</StatusItem>
          <StatusItem $m={12}>4 spaces</StatusItem>
          <StatusItem $m={11}><FaUnlock size={11} color="#555" /></StatusItem>
        </StatusRight>
      </StatusBar>

      <Watermark>
        <WaterTitle>Windows 정품 인증</WaterTitle>
        <WaterSub>[설정]으로 이동하여 Windows를 정품 인증합니다.</WaterSub>
      </Watermark>
    </Root>
  );
};

export default App;
